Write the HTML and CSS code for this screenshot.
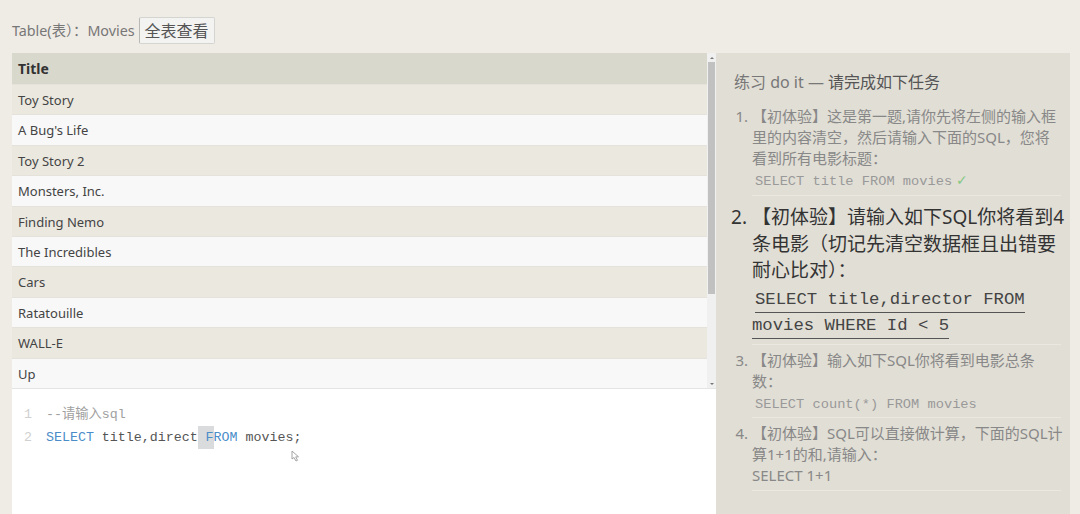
FILE: index.html
```html
<!DOCTYPE html>
<html lang="zh">
<head>
<meta charset="utf-8">
<title>Movies</title>
<link rel="stylesheet" href="styles.css">
</head>
<body>
<div class="toolbar">
  <span class="label">Table(表）：Movies</span>
  <button class="btn">全表查看</button>
</div>
<div class="main">
  <div class="left">
    <div class="grid-wrap">
      <div class="grid">
        <div class="row head">Title</div>
        <div class="row odd">Toy Story</div>
        <div class="row even">A Bug's Life</div>
        <div class="row odd">Toy Story 2</div>
        <div class="row even">Monsters, Inc.</div>
        <div class="row odd">Finding Nemo</div>
        <div class="row even">The Incredibles</div>
        <div class="row odd">Cars</div>
        <div class="row even">Ratatouille</div>
        <div class="row odd">WALL-E</div>
        <div class="row even">Up</div>
      </div>
      <div class="scrollbar">
        <div class="sb-btn"><span class="tri-up"></span></div>
        <div class="sb-thumb"></div>
        <div class="sb-track"></div>
        <div class="sb-btn"><span class="tri-down"></span></div>
      </div>
    </div>
    <div class="editor">
      <div class="gutter"><div>1</div><div>2</div></div>
      <div class="code">
        <div class="line cm-comment">--请输入sql</div>
        <div class="line"><span class="kw">SELECT</span> title,direct<span class="match"> <span class="kw">F</span></span><span class="kw">ROM</span> movies;</div>
      </div>
      <svg class="cursor" width="10" height="12" viewBox="0 0 10 12"><path d="M1 1 L1 9 L3 7.5 L5 11 L6.5 10.3 L4.7 6.9 L7.5 6.8 Z" fill="#fff" stroke="#9a9a9a" stroke-width="0.9" stroke-linejoin="round"/></svg>
    </div>
  </div>
  <div class="panel">
    <h3 class="ptitle"><span class="light">练习 do it —</span> 请完成如下任务</h3>
    <ol class="tasks">
      <li class="task">【初体验】这是第一题,请你先将左侧的输入框<br>里的内容清空，然后请输入下面的SQL，您将<br>看到所有电影标题：<br><code class="sql">SELECT title FROM movies</code> <span class="ok">✓</span></li>
      <li class="task current">【初体验】请输入如下SQL你将看到4<br>条电影（切记先清空数据框且出错要<br>耐心比对）：<br><code class="sql big">SELECT title,director FROM<br>movies WHERE Id &lt; 5</code></li>
      <li class="task">【初体验】输入如下SQL你将看到电影总条<br>数：<br><code class="sql">SELECT count(*) FROM movies</code></li>
      <li class="task">【初体验】SQL可以直接做计算，下面的SQL计<br>算1+1的和,请输入：<br>SELECT 1+1</li>
    </ol>
  </div>
</div>
</body>
</html>
```
FILE: styles.css
```css
* { box-sizing: border-box; }
html, body { margin: 0; padding: 0; }
body {
  width: 1080px;
  height: 514px;
  overflow: hidden;
  background: #efebe5;
  font-family: "Noto Sans", "Noto Sans CJK SC", sans-serif;
  color: #444;
}
.toolbar {
  display: flex;
  align-items: flex-start;
  gap: 4px;
  padding: 17px 0 0 12px;
  height: 53px;
}
.label {
  font-size: 14.3px;
  color: #777;
  line-height: 27px;
}
.btn {
  height: 27px;
  padding: 0 5px;
  font-family: "Noto Sans CJK SC", sans-serif;
  font-size: 16px;
  color: #555;
  background: #f3f3f2;
  border: 1px solid #d4d4d0;
  border-left-color: #b8b8b4;
  border-radius: 2px;
  line-height: 25px;
}
.main {
  display: flex;
  padding-left: 12px;
  height: 461px;
}
.left {
  width: 704px;
  display: flex;
  flex-direction: column;
}
.grid-wrap {
  display: flex;
  height: 335px;
}
.grid {
  flex: 1;
  display: flex;
  flex-direction: column;
  overflow: hidden;
}
.row {
  height: 30.4px;
  flex-shrink: 0;
  padding-left: 6px;
  font-size: 13px;
  line-height: 30px;
  color: #444;
  border-top: 1px solid #e4e2da;
}
.row.head {
  height: 31px;
  line-height: 31px;
  border-top: none;
  background: #d9d8cd;
  font-weight: bold;
  font-size: 14px;
  color: #333;
}
.row.odd { background: #ebe8e0; }
.row.even { background: #f8f8f8; }
.scrollbar {
  width: 9px;
  display: flex;
  flex-direction: column;
  background: #f0f0f0;
}
.sb-btn {
  height: 9px;
  display: flex;
  align-items: center;
  justify-content: center;
  background: #f0f0f0;
}
.tri-up, .tri-down {
  width: 0; height: 0;
  border-left: 2px solid transparent;
  border-right: 2px solid transparent;
}
.tri-up { border-bottom: 2px solid #777; }
.tri-down { border-top: 2px solid #777; }
.sb-thumb {
  height: 232px;
  margin: 0 1px;
  background: #c1c1c1;
}
.sb-track { flex: 1; }
.editor {
  position: relative;
  flex: 1;
  display: flex;
  align-items: flex-start;
  background: #fff;
  border-top: 1px solid #e4e4e4;
  padding-top: 14px;
  font-family: "Liberation Mono", monospace;
  font-size: 13.3px;
  line-height: 23px;
}
.gutter {
  width: 20px;
  text-align: right;
  color: #d0d0d0;
}
.code {
  margin-left: 14px;
  color: #555;
}
.line {
  white-space: pre;
  height: 23px;
}
.cm-comment { color: #a0a0a0; font-family: "Liberation Mono", "Noto Sans CJK SC", monospace; }
.kw { color: #4b8dc9; }
.match {
  display: inline-block;
  background: #d9dbdc;
  line-height: 23px;
}
.cursor {
  position: absolute;
  left: 279px;
  top: 61px;
}
.panel {
  width: 354px;
  background: #e1ded5;
  padding: 17px 9px 0 18px;
}
.ptitle {
  margin: 0;
  font-size: 16px;
  font-weight: normal;
  line-height: 24px;
  color: #555;
}
.ptitle .light { color: #777; }
.tasks {
  margin: 12px 0 0 0;
  padding-left: 18px;
}
.task {
  font-size: 15px;
  line-height: 21px;
  color: #888;
  white-space: nowrap;
  padding-bottom: 4px;
  margin-bottom: 5px;
  border-bottom: 1px solid #ebe8e1;
}
.task.current {
  margin-top: 8px;
  padding-bottom: 7px;
  font-size: 19px;
  line-height: 26.5px;
  color: #333;
}
.sql {
  font-family: "Liberation Mono", monospace;
  font-size: 13.7px;
  line-height: 1;
  color: #999;
  margin-left: 3px;
}
.sql.big {
  font-size: 17.3px;
  line-height: 1;
  color: #444;
  padding-bottom: 3px;
  border-bottom: 1.5px solid #555;
  margin-left: 3px;
}
.ok { color: #86c886; font-family: "DejaVu Sans", sans-serif; font-size: 14px; }
```
